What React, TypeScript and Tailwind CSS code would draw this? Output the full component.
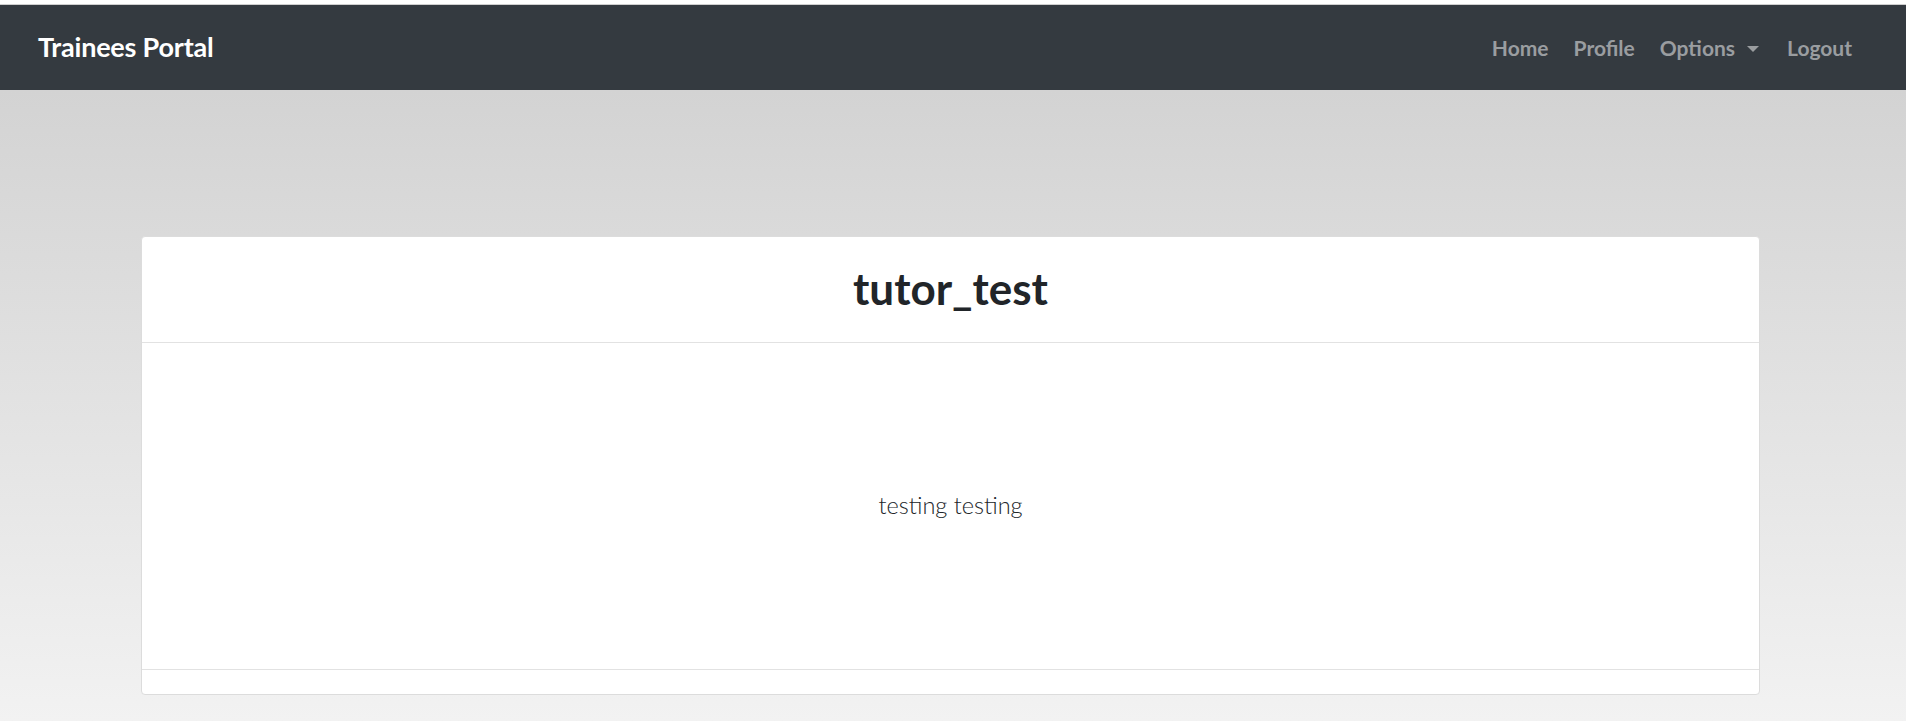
import React from "react";

export default function App() {
  return (
    <div
      className="w-full h-[721px] flex flex-col overflow-hidden"
      style={{ fontFamily: "Lato, 'Noto Sans', sans-serif" }}
    >
      <div className="h-[5px] bg-white border-b border-[#cfcfcf] shrink-0" />
      <nav className="h-[85px] shrink-0 bg-[#343a40] flex items-center justify-between pl-[38px] pr-[54px]">
        <span className="text-white font-bold text-[27px] tracking-[-0.2px]">Trainees Portal</span>
        <ul className="flex items-center gap-[25px] text-[#9a9da0] font-bold text-[21px]">
          <li>Home</li>
          <li>Profile</li>
          <li className="flex items-center gap-[12px]">
            Options
            <span className="inline-block w-0 h-0 border-l-[6px] border-r-[6px] border-t-[6px] border-l-transparent border-r-transparent border-t-[#9a9da0] mt-[2px]" />
          </li>
          <li className="ml-[3px]">Logout</li>
        </ul>
      </nav>
      <main className="flex-1 bg-gradient-to-b from-[#d3d3d3] to-[#f2f2f2] pt-[146px] pl-[141px] pr-[146px]">
        <div className="bg-white border border-[#dcdcdc] rounded-[4px] flex flex-col">
          <div className="h-[106px] border-b border-[#e2e2e2] flex items-center justify-center">
            <h1 className="text-[#212529] font-bold text-[44px] leading-none pb-[4px]">tutor_test</h1>
          </div>
          <div className="h-[326px] flex items-center justify-center">
            <p className="text-[#212529] font-light text-[23.5px]">testing testing</p>
          </div>
          <div className="h-[25px] border-t border-[#e2e2e2]" />
        </div>
      </main>
    </div>
  );
}
